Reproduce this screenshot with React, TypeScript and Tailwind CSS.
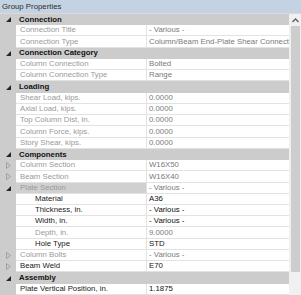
type Row =
  | { kind: "cat"; label: string }
  | {
      kind: "prop";
      label: string;
      value: string;
      dimName?: boolean;
      dimValue?: boolean;
      indent?: boolean;
      expander?: "open" | "closed";
      selected?: boolean;
    };

const rows: Row[] = [
  { kind: "cat", label: "Connection" },
  { kind: "prop", label: "Connection Title", value: "- Various -", dimName: true, dimValue: true },
  { kind: "prop", label: "Connection Type", value: "Column/Beam End-Plate Shear Connection", dimName: true, dimValue: true },
  { kind: "cat", label: "Connection Category" },
  { kind: "prop", label: "Column Connection", value: "Bolted", dimName: true, dimValue: true },
  { kind: "prop", label: "Column Connection Type", value: "Range", dimName: true, dimValue: true },
  { kind: "cat", label: "Loading" },
  { kind: "prop", label: "Shear Load, kips.", value: "0.0000", dimName: true, dimValue: true },
  { kind: "prop", label: "Axial Load, kips.", value: "0.0000", dimName: true, dimValue: true },
  { kind: "prop", label: "Top Column Dist, in.", value: "0.0000", dimName: true, dimValue: true },
  { kind: "prop", label: "Column Force, kips.", value: "0.0000", dimName: true, dimValue: true },
  { kind: "prop", label: "Story Shear, kips.", value: "0.0000", dimName: true, dimValue: true },
  { kind: "cat", label: "Components" },
  { kind: "prop", label: "Column Section", value: "W16X50", dimName: true, dimValue: true, expander: "closed" },
  { kind: "prop", label: "Beam Section", value: "W16X40", dimName: true, dimValue: true, expander: "closed" },
  { kind: "prop", label: "Plate Section", value: "- Various -", dimName: true, dimValue: true, expander: "open", selected: true },
  { kind: "prop", label: "Material", value: "A36", indent: true },
  { kind: "prop", label: "Thickness, in.", value: "- Various -", indent: true },
  { kind: "prop", label: "Width, in.", value: "- Various -", indent: true },
  { kind: "prop", label: "Depth, in.", value: "9.0000", indent: true, dimName: true, dimValue: true },
  { kind: "prop", label: "Hole Type", value: "STD", indent: true },
  { kind: "prop", label: "Column Bolts", value: "- Various -", dimName: true, dimValue: true, expander: "closed" },
  { kind: "prop", label: "Beam Weld", value: "E70", expander: "closed" },
  { kind: "cat", label: "Assembly" },
  { kind: "prop", label: "Plate Vertical Position, in.", value: "1.1875" },
];

const OpenGlyph = () => (
  <svg width="5" height="5" viewBox="0 0 5 5">
    <path d="M5 0 L5 5 L0 5 Z" fill="#262626" />
  </svg>
);

const ClosedGlyph = () => (
  <svg width="5" height="7" viewBox="0 0 5 7">
    <path d="M0.5 0.5 L4.5 3.5 L0.5 6.5 Z" fill="none" stroke="#a0a0a0" strokeWidth="1" />
  </svg>
);

const PropRow = ({ row }: { row: Extract<Row, { kind: "prop" }> }) => (
  <div className="flex h-[11.24px] shrink-0">
    <div className="w-[16px] bg-[#cccccc] flex items-center justify-center pl-[1px]">
      {row.expander === "open" && <OpenGlyph />}
      {row.expander === "closed" && <ClosedGlyph />}
    </div>
    <div
      className={`w-[131px] flex items-center border-r border-b border-[#e2e2e2] overflow-hidden whitespace-nowrap ${
        row.selected ? "bg-[#d0d0d0]" : "bg-white"
      } ${row.indent ? "pl-[19px]" : "pl-[4px]"} ${row.dimName ? "text-[#9a9a9a]" : "text-[#1a1a1a]"}`}
    >
      {row.label}
    </div>
    <div
      className={`flex-1 flex items-center bg-white border-b border-[#e2e2e2] pl-[2px] overflow-hidden whitespace-nowrap ${
        row.dimValue ? "text-[#7a7a7a]" : "text-[#111111]"
      }`}
    >
      {row.value}
    </div>
  </div>
);

const CatRow = ({ label }: { label: string }) => (
  <div className="flex h-[11.24px] shrink-0 bg-[#cccccc] items-center">
    <div className="w-[16px] flex items-center justify-center pl-[1px]">
      <OpenGlyph />
    </div>
    <div className="pl-[3px] font-bold text-[#111111]">{label}</div>
  </div>
);

export default function App() {
  return (
    <div
      className="w-[301px] h-[295px] bg-[#f0f0f0] flex flex-col overflow-hidden text-[7.8px] leading-none"
      style={{ fontFamily: '"Liberation Sans", Arial, sans-serif' }}
    >
      <div className="h-[13px] shrink-0 bg-[#c4d3e3] flex items-center pl-[2px] text-[#2b2b2b]">
        Group Properties
      </div>
      <div className="flex flex-1 min-h-0 border-t border-[#dadada]">
        <div className="w-[289px] flex flex-col overflow-hidden">
          {rows.map((r, i) =>
            r.kind === "cat" ? <CatRow key={i} label={r.label} /> : <PropRow key={i} row={r} />
          )}
        </div>
        <div className="flex-1 flex flex-col items-center bg-[#f0f0f0]">
          <div className="h-[12px] flex items-center justify-center">
            <svg width="7" height="5" viewBox="0 0 7 5">
              <path d="M0.5 4 L3.5 1 L6.5 4" fill="none" stroke="#606060" strokeWidth="1.4" />
            </svg>
          </div>
          <div className="w-[9px] h-[246px] bg-[#cdcdcd]" />
        </div>
      </div>
    </div>
  );
}
